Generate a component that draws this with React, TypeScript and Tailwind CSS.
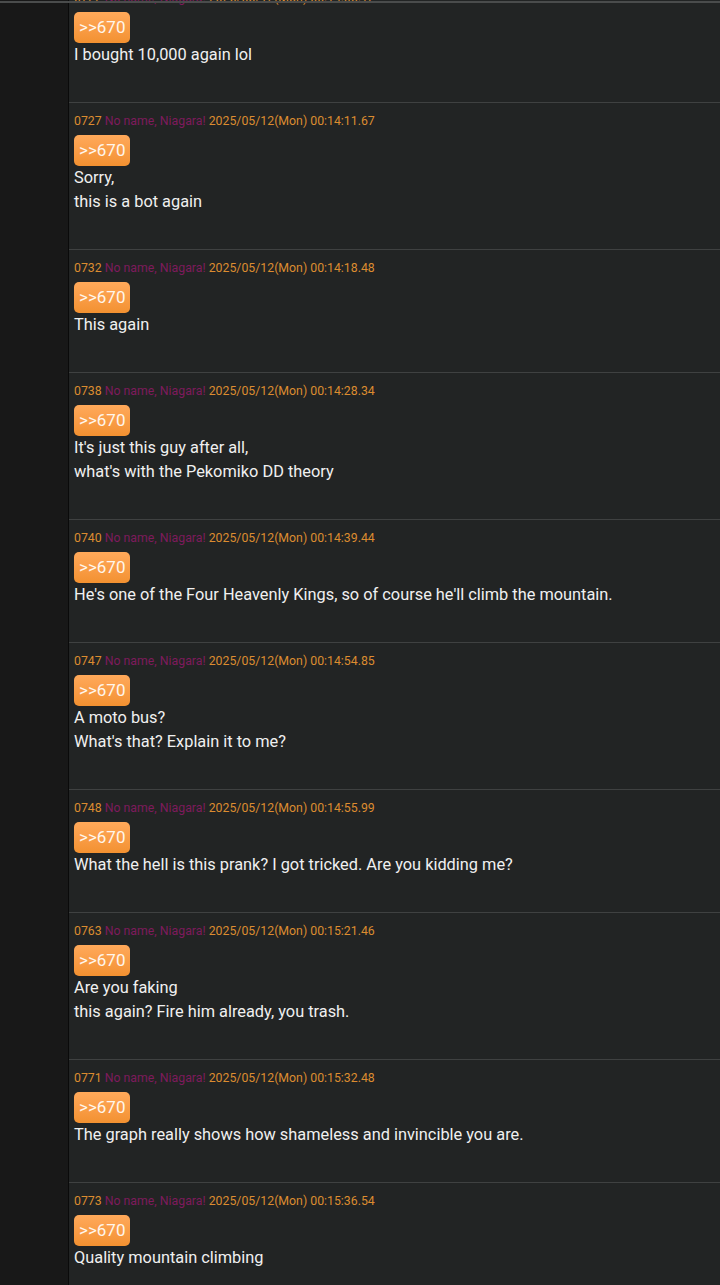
import React from "react";

type Post = { no: string; time: string; lines: string[] };

const posts: Post[] = [
  { no: "0722", time: "00:14:05.12", lines: ["I bought 10,000 again lol"] },
  { no: "0727", time: "00:14:11.67", lines: ["Sorry,", "this is a bot again"] },
  { no: "0732", time: "00:14:18.48", lines: ["This again"] },
  { no: "0738", time: "00:14:28.34", lines: ["It's just this guy after all,", "what's with the Pekomiko DD theory"] },
  { no: "0740", time: "00:14:39.44", lines: ["He's one of the Four Heavenly Kings, so of course he'll climb the mountain."] },
  { no: "0747", time: "00:14:54.85", lines: ["A moto bus?", "What's that? Explain it to me?"] },
  { no: "0748", time: "00:14:55.99", lines: ["What the hell is this prank? I got tricked. Are you kidding me?"] },
  { no: "0763", time: "00:15:21.46", lines: ["Are you faking", "this again? Fire him already, you trash."] },
  { no: "0771", time: "00:15:32.48", lines: ["The graph really shows how shameless and invincible you are."] },
  { no: "0773", time: "00:15:36.54", lines: ["Quality mountain climbing"] },
];

function PostItem({ p }: { p: Post }) {
  return (
    <div className="border-t border-[#3f4141] pl-[5px] pt-[10px] pb-[35px]">
      <div className="text-[12.3px] leading-[16px] whitespace-nowrap">
        <span className="text-[#dc8c30]">{p.no}</span>{" "}
        <span className="text-[#7e1b5c]">No name, Niagara!</span>{" "}
        <span className="text-[#dc8c30]">2025/05/12(Mon) {p.time}</span>
      </div>
      <div className="mt-[6px] flex">
        <span className="h-[31px] rounded-[5px] bg-gradient-to-b from-[#ffa95a] to-[#f39130] px-[5px] text-[17px] leading-[31px] text-[#fff6ec]">
          &gt;&gt;670
        </span>
      </div>
      <div className="text-[16.35px] leading-[24px] text-[#f0f0f0]">
        {p.lines.map((l, i) => (
          <div key={i}>{l}</div>
        ))}
      </div>
    </div>
  );
}

export default function App() {
  return (
    <div
      className="relative flex h-[1285px] w-[720px] overflow-hidden bg-[#222424]"
      style={{ fontFamily: "Roboto, 'Noto Sans', sans-serif" }}
    >
      <div className="w-[68px] shrink-0 bg-[#181818]" />
      <div className="w-px shrink-0 bg-[#0a0a0a]" />
      <div className="flex-1 -mt-[21px]">
        {posts.map((p) => (
          <PostItem key={p.no} p={p} />
        ))}
      </div>
      <div className="absolute left-0 right-0 top-[1px] h-[2px] bg-[#4a4c4c]" />
    </div>
  );
}
